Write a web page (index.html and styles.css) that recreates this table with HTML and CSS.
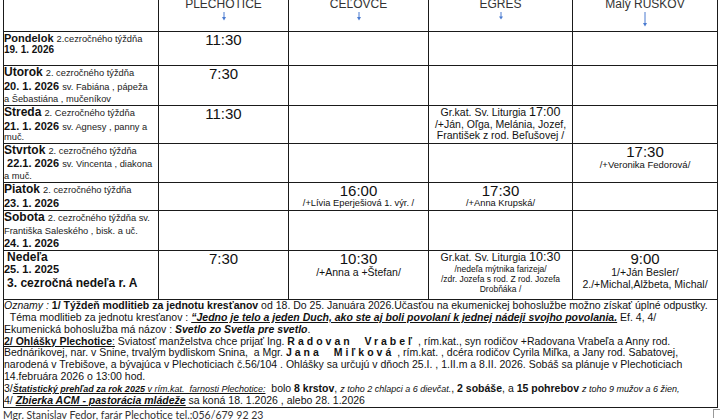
FILE: index.html
```html
<!DOCTYPE html>
<html lang="sk">
<head>
<meta charset="utf-8">
<title>Rozpis bohoslužieb</title>
<link rel="stylesheet" href="styles.css">
</head>
<body>
<table class="sched">
  <colgroup>
    <col class="c-day">
    <col class="c-p1">
    <col class="c-p2">
    <col class="c-p3">
    <col class="c-p4">
  </colgroup>
  <tr class="r-head">
    <td class="corner"></td>
    <th><span class="place">PLECHOTICE</span><svg class="arrow" width="6" height="9" viewBox="0 0 6 9"><line x1="3" y1="0" x2="3" y2="6" stroke="#4a7bd0" stroke-width="1"/><polygon points="1,5 5,5 3,8.5" fill="#4a7bd0"/></svg></th>
    <th><span class="place">CEĽOVCE</span><svg class="arrow" width="6" height="9" viewBox="0 0 6 9"><line x1="3" y1="0" x2="3" y2="6" stroke="#4a7bd0" stroke-width="1"/><polygon points="1,5 5,5 3,8.5" fill="#4a7bd0"/></svg></th>
    <th><span class="place">EGRES</span><svg class="arrow" width="6" height="8" viewBox="0 0 6 8"><line x1="3" y1="0" x2="3" y2="5" stroke="#4a7bd0" stroke-width="1"/><polygon points="1,4.5 5,4.5 3,7.5" fill="#4a7bd0"/></svg></th>
    <th><span class="place">Malý RUSKOV</span><svg class="arrow" width="6" height="15" viewBox="0 0 6 15"><line x1="3" y1="0" x2="3" y2="12" stroke="#4a7bd0" stroke-width="1"/><polygon points="1,11 5,11 3,14.5" fill="#4a7bd0"/></svg></th>
  </tr>
  <tr class="r-mon">
    <td class="day">
      <div class="ln h11"><b class="dn dn-s">Pondelok</b> <span class="wk">2.cezročného týždňa</span></div>
      <div class="ln"><b class="dt dt-s">19. 1. 2026</b></div>
    </td>
    <td class="slot"><div class="time">11:30</div></td>
    <td></td><td></td><td></td>
  </tr>
  <tr class="r-tue">
    <td class="day">
      <div class="ln h14"><b class="dn">Utorok</b> <span class="wk">2. cezročného týždňa</span></div>
      <div class="ln h12"><b class="dt">20. 1. 2026</b> <span class="wk">sv. Fabiána , pápeža</span></div>
      <div class="ln"><span class="wk">a Šebastiána , mučeníkov</span></div>
    </td>
    <td class="slot"><div class="time">7:30</div></td>
    <td></td><td></td><td></td>
  </tr>
  <tr class="r-wed">
    <td class="day">
      <div class="ln h14"><b class="dn">Streda</b> <span class="wk">2. Cezročného týždňa</span></div>
      <div class="ln h10"><b class="dt">21. 1. 2026</b> <span class="wk">sv. Agnesy , panny a</span></div>
      <div class="ln"><span class="wk">muč.</span></div>
    </td>
    <td class="slot"><div class="time">11:30</div></td>
    <td></td>
    <td class="slot">
      <div class="lit">Gr.kat. Sv. Liturgia <span class="lt">17:00</span></div>
      <div class="nm nm-l">/+Ján, Oľga, Melánia, Jozef,</div>
      <div class="nm nm-l">František z rod. Beľušovej /</div>
    </td>
    <td></td>
  </tr>
  <tr class="r-thu">
    <td class="day">
      <div class="ln"><b class="dn">Štvrtok</b> <span class="wk">2. cezročného týždňa</span></div>
      <div class="ln h12">&nbsp;<b class="dt">22.1. 2026</b> <span class="wk">sv. Vincenta , diakona</span></div>
      <div class="ln"><span class="wk">a muč.</span></div>
    </td>
    <td></td><td></td><td></td>
    <td class="slot"><div class="time">17:30</div><div class="nm nm-m">/+Veronika Fedorová/</div></td>
  </tr>
  <tr class="r-fri">
    <td class="day">
      <div class="ln h14"><b class="dn">Piatok</b> <span class="wk">2. cezročného týždňa</span></div>
      <div class="ln"><b class="dt">23. 1. 2026</b></div>
    </td>
    <td></td>
    <td class="slot"><div class="time">16:00</div><div class="nm">/+Lívia Eperješiová 1. výr. /</div></td>
    <td class="slot"><div class="time">17:30</div><div class="nm">/+Anna Krupská/</div></td>
    <td></td>
  </tr>
  <tr class="r-sat">
    <td class="day">
      <div class="ln"><b class="dn">Sobota</b> <span class="wk">2. cezročného týždňa sv.</span></div>
      <div class="ln"><span class="wk">Františka Saleského , bisk. a uč.</span></div>
      <div class="ln"><b class="dt">24. 1. 2026</b></div>
    </td>
    <td></td><td></td><td></td><td></td>
  </tr>
  <tr class="r-sun">
    <td class="day">
      <div class="ln h12">&nbsp;<b class="dn">Nedeľa</b></div>
      <div class="ln h14"><b class="dt">25. 1. 2025</b></div>
      <div class="ln">&nbsp;<b class="dn">3. cezročná nedeľa r. A</b></div>
    </td>
    <td class="slot"><div class="time">7:30</div></td>
    <td class="slot"><div class="time">10:30</div><div class="nm nm-l">/+Anna a +Štefan/</div></td>
    <td class="slot">
      <div class="lit">Gr.kat. Sv. Liturgia <span class="lt">10:30</span></div>
      <div class="nm nm-xs">/nedeľa mýtnika farizeja/</div>
      <div class="nm nm-xs">/zdr. Jozefa s rod. Z rod. Jozefa</div>
      <div class="nm nm-xs">Drobňáka /</div>
    </td>
    <td class="slot"><div class="time">9:00</div><div class="nm nm-l">1/+Ján Besler/</div><div class="nm nm-l">2./+Michal,Alžbeta, Michal/</div></td>
  </tr>
  <tr class="r-notes">
    <td colspan="5" class="notes">
      <div class="nl"><i>Oznamy :</i> <b>1/ Týždeň modlitieb za jednotu kresťanov</b> od 18. Do 25. Januára 2026.Účasťou na ekumenickej bohoslužbe možno získať úplné odpustky.</div>
      <div class="nl">&nbsp;&nbsp;Téma modlitieb za jednotu kresťanov : <b><i><u>“Jedno je telo a jeden Duch, ako ste aj boli povolaní k jednej nádeji svojho povolania.</u></i></b> Ef. 4, 4/</div>
      <div class="nl">Ekumenická bohoslužba má názov : <b><i>Svetlo zo Svetla pre svetlo</i></b>.</div>
      <div class="nl"><b><u>2/ Ohlášky Plechotice</u></b><u>:</u> Sviatosť manželstva chce prijať Ing. <b class="sp">Radovan&nbsp; Vrabeľ</b> , rím.kat., syn rodičov +Radovana Vrabeľa a Anny rod.</div>
      <div class="nl">Bednárikovej, nar. v Snine, trvalým bydliskom Snina,&nbsp; a Mgr. <b class="sp">Jana&nbsp; Miľková</b> , rím.kat. , dcéra rodičov Cyrila Miľka, a Jany rod. Sabatovej,</div>
      <div class="nl">narodená v Trebišove, a bývajúca v Plechoticiach č.56/104 . Ohlášky sa určujú v dňoch 25.I. , 1.II.m a 8.II. 2026. Sobáš sa plánuje v Plechoticiach</div>
      <div class="nl">14.februára 2026 o 13:00 hod.</div>
      <div class="nl">3/<b class="small"><i><u>Štatistický prehľad za rok 2025</u></i></b><i class="small"><u> v rím.kat.&nbsp; farnosti Plechotice:</u></i>&nbsp; bolo <b>8 krstov</b>, <i class="small">z toho 2 chlapci a 6 dievčat.</i>, <b>2 sobáše</b>, a <b>15 pohrebov</b> <i class="small">z toho 9 mužov a 6 žien,</i></div>
      <div class="nl">4/ <b><i><u>Zbierka ACM - pastorácia mládeže</u></i></b> sa koná 18. 1.2026 , alebo 28. 1.2026</div>
    </td>
  </tr>
</table>
<div class="footer">
  <span class="sign">Mgr. Stanislav Fedor, farár Plechotice tel.:056/679 92 23</span>
  <span class="stub"></span>
</div>
</body>
</html>
```
FILE: styles.css
```css
html, body {
  margin: 0;
  padding: 0;
  background: #fff;
}
body {
  font-family: "Liberation Sans", Arial, sans-serif;
  color: #111;
  overflow: hidden;
}
.sched {
  border-collapse: collapse;
  table-layout: fixed;
  width: 714px;
  margin: -2px 0 0 3px;
  font-size: 10px;
}
.sched td, .sched th {
  border: 1px solid #1a1a1a;
  padding: 0;
  vertical-align: top;
  overflow: hidden;
}
.c-day { width: 155px; }
.c-p1 { width: 130px; }
.c-p2 { width: 140px; }
.c-p3 { width: 144px; }
.c-p4 { width: 145px; }

.r-head { height: 33px; }
.r-mon { height: 34px; }
.r-tue { height: 39px; }
.r-wed { height: 38px; }
.r-thu { height: 37px; }
.r-fri { height: 27px; }
.r-sat { height: 39px; }
.r-sun { height: 49px; }
.r-notes { height: 107px; }

.sched th {
  font-weight: normal;
  text-align: center;
  color: #333;
  font-size: 12px;
  line-height: 11px;
}
.sched .corner { border-top: none; }
.place { display: block; }
.arrow { display: block; margin: 2px auto 0; }

.day { padding-left: 1px; }
.ln {
  height: 13px;
  line-height: 13px;
  font-size: 11px;
  white-space: nowrap;
}
.h10 { height: 10px; }
.h11 { height: 11px; }
.h12 { height: 12px; }
.h14 { height: 14px; }
.dn { font-size: 12px; }
.dn-s { font-size: 11px; }
.dt { font-size: 11px; }
.dt-s { font-size: 10px; }
.wk { font-size: 9.3px; color: #222; }

.slot { text-align: center; padding-top: 1px; }
.time { font-size: 15px; line-height: 15px; height: 15px; }
.lit {
  font-size: 10.5px;
  line-height: 13px;
  height: 13px;
  white-space: nowrap;
}
.lt { font-size: 12.5px; }
.nm { font-size: 9.3px; line-height: 10px; height: 10px; white-space: nowrap; }
.nm-m { font-size: 9.5px; line-height: 12px; height: 12px; }
.nm-l { font-size: 10.5px; line-height: 12px; height: 12px; }
.nm-xs { font-size: 8.5px; line-height: 10px; height: 10px; }
.r-wed .nm-l { height: 11px; line-height: 11px; }

.notes {
  font-size: 10.5px;
  line-height: 11.85px;
  padding: 0 0 0 3px;
}
.nl { height: 11.85px; white-space: nowrap; }
.sp { letter-spacing: 3px; }
.small { font-size: 9px; }

.footer {
  display: flex;
  justify-content: space-between;
  align-items: flex-start;
  margin-left: 3px;
  padding-top: 1px;
}
.sign {
  font-family: Lato, "Open Sans", sans-serif;
  font-size: 10.5px;
  color: #333;
}
.stub {
  width: 6px;
  height: 8px;
  border-left: 1px solid #999;
  border-top: 1px solid #999;
  margin-top: 0;
}
```
